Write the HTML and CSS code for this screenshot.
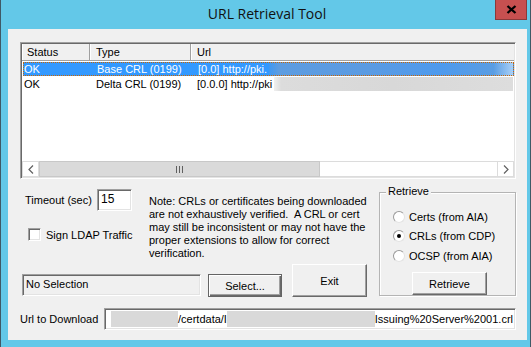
FILE: index.html
```html
<!DOCTYPE html>
<html>
<head>
    <meta http-equiv="Content-Type" content="text/html; charset=utf-8" />
    <title>URL Retrieval Tool</title>
    <link rel="stylesheet" href="styles.css">
</head>
<body>
<div class="window">
    <div class="titlebar">
        <div class="title">URL Retrieval Tool</div>
        <div class="close">
            <svg width="11" height="9" viewBox="0 0 11 9"><path d="M1.5 1 L9.5 8 M9.5 1 L1.5 8" stroke="#000" stroke-width="2.3" fill="none"/></svg>
        </div>
    </div>

    <div class="client">
        <div class="listview">
            <div class="lv-header">
                <div class="hcol c-status">Status</div>
                <div class="hcol c-type">Type</div>
                <div class="hcol c-url">Url</div>
            </div>
            <div class="lv-body">
                <div class="row selected">
                    <div class="cell c-status">OK</div>
                    <div class="cell c-type">Base CRL (0199)</div>
                    <div class="cell c-url"><span>[0.0] http://pki.</span><span class="blur blur-blue"></span></div>
                </div>
                <div class="row">
                    <div class="cell c-status">OK</div>
                    <div class="cell c-type">Delta CRL (0199)</div>
                    <div class="cell c-url"><span>[0.0.0] http://pki</span><span class="blur blur-gray"></span></div>
                </div>
            </div>
            <div class="hscroll">
                <div class="sb-btn">
                    <svg width="6" height="9" viewBox="0 0 6 9"><path d="M5 0.5 L1 4.5 L5 8.5" stroke="#606060" stroke-width="1.2" fill="none"/></svg>
                </div>
                <div class="sb-thumb">
                    <svg width="7" height="7" viewBox="0 0 7 7"><path d="M0.5 0 V7 M3.5 0 V7 M6.5 0 V7" stroke="#606060" stroke-width="1"/></svg>
                </div>
                <div class="sb-track"></div>
                <div class="sb-btn">
                    <svg width="6" height="9" viewBox="0 0 6 9"><path d="M1 0.5 L5 4.5 L1 8.5" stroke="#606060" stroke-width="1.2" fill="none"/></svg>
                </div>
            </div>
        </div>

        <div class="lower">
            <div class="left">
                <div class="opts">
                    <div class="settings">
                        <div class="timeout">
                            <span class="timeout-label">Timeout (sec)</span>
                            <div class="textbox tb-timeout">15</div>
                        </div>
                        <div class="check">
                            <span class="checkbox"></span>
                            <span class="check-label">Sign LDAP Traffic</span>
                        </div>
                    </div>
                    <div class="note">
                        Note: CRLs or certificates being downloaded<br>
                        are not exhaustively verified.&nbsp; A CRL or cert<br>
                        may still be inconsistent or may not have the<br>
                        proper extensions to allow for correct<br>
                        verification.
                    </div>
                </div>
                <div class="actions">
                    <div class="textbox status-box">No Selection</div>
                    <div class="button default btn-select">Select...</div>
                    <div class="button btn-exit">Exit</div>
                </div>
            </div>

            <div class="group">
                <span class="legend">Retrieve</span>
                <div class="radio-row"><span class="radio"></span><span class="radio-label">Certs (from AIA)</span></div>
                <div class="radio-row"><span class="radio checked"></span><span class="radio-label">CRLs (from CDP)</span></div>
                <div class="radio-row"><span class="radio"></span><span class="radio-label">OCSP (from AIA)</span></div>
                <div class="button btn-retrieve">Retrieve</div>
            </div>
        </div>

        <div class="urlrow">
            <span class="url-label">Url to Download</span>
            <div class="textbox url-box">
                <span class="ublur ublur-1"></span>
                <span class="utext">/certdata/I</span>
                <span class="ublur ublur-2"></span>
                <span class="utext">Issuing%20Server%2001.crl</span>
            </div>
        </div>
    </div>
</div>
</body>
</html>
```

FILE: styles.css
```css
* {
    box-sizing: border-box;
}

html,
body {
    margin: 0;
    padding: 0;
    overflow: hidden;
}

body {
    width: 531px;
    height: 347px;
    font-family: "Liberation Sans", Arial, sans-serif;
    font-size: 11px;
    color: #000;
}

.window {
    width: 531px;
    height: 347px;
    background: #63c8e8;
    border-left: 1px solid #3f5966;
    border-right: 1px solid #3f5966;
    display: flex;
    flex-direction: column;
}

/* title bar */

.titlebar {
    height: 29px;
    flex-shrink: 0;
    display: flex;
}

.title {
    flex: 1;
    padding-left: 38px;
    text-align: center;
    font-family: "Open Sans", sans-serif;
    font-size: 14px;
    line-height: 28px;
    color: #111;
}

.close {
    width: 32px;
    height: 20px;
    margin-right: 3px;
    background: #c75050;
    border: 1px solid #8a3a3a;
    border-top: none;
    display: flex;
    align-items: center;
    justify-content: center;
}

/* dialog body */

.client {
    height: 311px;
    margin: 0 3px 0 7px;
    background: #f0f0f0;
    padding: 13px 11px 0 12px;
}

.listview {
    height: 137px;
    padding: 1px;
    background: #fff;
    border: 1px solid;
    border-color: #a0a0a0 #fff #fff #a0a0a0;
    box-shadow: inset 1px 1px #696969, inset -1px -1px #e3e3e3;
    display: flex;
    flex-direction: column;
}

.lv-header {
    height: 17px;
    display: flex;
    background: #f0f0f0;
    border-bottom: 1px solid #a0a0a0;
    flex-shrink: 0;
}

.hcol {
    line-height: 16px;
    border-right: 1px solid #a0a0a0;
    box-shadow: inset 1px 0 #fff;
    padding-left: 6px;
}

.hcol.c-status {
    padding-left: 5px;
}

.c-status {
    width: 68px;
    flex-shrink: 0;
}

.c-type {
    width: 101px;
    flex-shrink: 0;
}

.c-url {
    flex: 1;
    min-width: 0;
}

.hcol.c-url {
    border-right: none;
}

.lv-body {
    flex: 1;
    padding-top: 1px;
}

.row {
    height: 14px;
    display: flex;
    line-height: 14px;
    margin-bottom: 1px;
    white-space: nowrap;
}

.row.selected {
    background: #3399ff;
    color: #fff;
    outline: 1px dotted #cc6600;
    outline-offset: -1px;
    margin-left: 1px;
}

.cell {
    padding-left: 6px;
}

.cell.c-status {
    padding-left: 2px;
}

.row.selected .cell.c-status {
    padding-left: 1px;
}

.cell.c-url {
    display: flex;
    padding-right: 1px;
}

.blur {
    flex: 1;
    margin-left: 2px;
}

.blur-blue {
    background: linear-gradient(90deg, #3f98f2 0%, #5d9ce0 4%, #5b9be2 40%, #4e9aed 70%, #5a9de3 92%, #a9d0f7 100%);
}

.blur-gray {
    background: linear-gradient(90deg, #f0f0f0 0%, #dcdcdc 3%, #d8d8d8 50%, #dddddd 100%);
}

.hscroll {
    height: 16px;
    display: flex;
    flex-shrink: 0;
    background: #fff;
}

.sb-btn {
    width: 17px;
    border: 1px solid #dcdcdc;
    display: flex;
    align-items: center;
    justify-content: center;
    background: #fff;
}

.sb-thumb {
    width: 281px;
    background: #dadada;
    border: 1px solid #c8c8c8;
    display: flex;
    align-items: center;
    justify-content: center;
}

.sb-track {
    flex: 1;
    background: #fff;
    border-top: 1px solid #dcdcdc;
    border-bottom: 1px solid #dcdcdc;
}

/* lower part */

.lower {
    display: flex;
    margin-top: 10px;
    height: 108px;
}

.left {
    width: 359px;
    display: flex;
    flex-direction: column;
}

.opts {
    height: 75px;
    display: flex;
}

.settings {
    width: 129px;
    padding-left: 5px;
}

.timeout {
    height: 22px;
    display: flex;
    align-items: center;
}

.timeout-label {
    width: 72px;
}

.textbox {
    height: 22px;
    background: #fff;
    border: 1px solid;
    border-color: #a0a0a0 #fff #fff #a0a0a0;
    box-shadow: inset 1px 1px #696969, inset -1px -1px #e3e3e3;
    line-height: 18px;
    padding-left: 3px;
    white-space: nowrap;
    overflow: hidden;
}

.tb-timeout {
    width: 35px;
    font-size: 12px;
}

.check {
    display: flex;
    align-items: center;
    margin-top: 17px;
    padding-left: 3px;
    height: 13px;
}

.checkbox {
    width: 13px;
    height: 13px;
    background: #fff;
    border: 1px solid;
    border-color: #a0a0a0 #fff #fff #a0a0a0;
    box-shadow: inset 1px 1px #696969, inset -1px -1px #e3e3e3;
}

.check-label {
    margin-left: 5px;
}

.note {
    padding-top: 6px;
    line-height: 13px;
    white-space: nowrap;
}

.actions {
    height: 33px;
    display: flex;
    align-items: flex-end;
}

.status-box {
    width: 179px;
    margin-left: 2px;
    margin-bottom: 1px;
    background: #f0f0f0;
}

.button {
    background: #f0f0f0;
    border: 1px solid;
    border-color: #fff #696969 #696969 #fff;
    box-shadow: inset -1px -1px #a0a0a0;
    display: flex;
    align-items: center;
    justify-content: center;
}

.button.default {
    border: 1px solid #646464;
    box-shadow: inset 1px 1px #fff, inset -1px -1px #696969, inset -2px -2px #a0a0a0;
}

.btn-select {
    width: 74px;
    height: 23px;
    margin-left: 7px;
}

.btn-exit {
    width: 75px;
    height: 33px;
    margin-left: 10px;
}

/* retrieve group */

.group {
    width: 137px;
    height: 104px;
    margin-top: 3px;
    border: 1px solid #b4b4b4;
    box-shadow: inset 1px 1px #fff, 1px 1px #fff;
}

.legend {
    display: inline-block;
    margin: -8px 0 0 6px;
    padding: 0 2px;
    line-height: 13px;
    background: #f0f0f0;
    vertical-align: top;
}

.radio-row {
    height: 19.5px;
    display: flex;
    align-items: center;
    padding-left: 13px;
}

.radio-row:first-of-type {
    margin-top: 2px;
}

.radio {
    width: 12px;
    height: 12px;
    border-radius: 50%;
    background: #fff;
    border: 1px solid #9a9a9a;
    border-right-color: #e3e3e3;
    border-bottom-color: #e3e3e3;
    display: flex;
    align-items: center;
    justify-content: center;
}

.radio.checked::after {
    content: "";
    width: 4px;
    height: 4px;
    border-radius: 50%;
    background: #000;
}

.radio-label {
    margin-left: 4px;
}

.btn-retrieve {
    width: 75px;
    height: 23px;
    margin: 6.5px 0 0 32px;
}

/* url row */

.urlrow {
    display: flex;
    align-items: center;
    margin-top: 11px;
}

.url-label {
    width: 84px;
}

.url-box {
    width: 412px;
    display: flex;
    padding: 2px 2px 2px 6px;
    line-height: 16px;
}

.ublur {
    height: 16px;
    background: #d9d9d9;
}

.ublur-1 {
    width: 67px;
}

.ublur-2 {
    flex: 1;
}

.utext {
    flex-shrink: 0;
}
```
